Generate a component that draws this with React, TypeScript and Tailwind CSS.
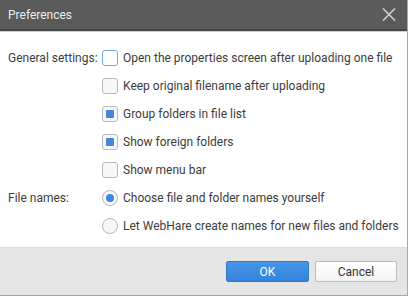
import React from "react";

function Checkbox({ checked, focused }: { checked?: boolean; focused?: boolean }) {
  return (
    <span
      className={`flex h-4 w-4 shrink-0 items-center justify-center rounded-[3px] border ${
        focused ? "border-[#6fa8ec] bg-white" : "border-[#b9b9b9] bg-[#f7f7f7]"
      }`}
    >
      {checked && <span className="h-2 w-2 rounded-[1px] bg-[#3f87df]" />}
    </span>
  );
}

function Radio({ checked }: { checked?: boolean }) {
  return (
    <span className="flex h-4 w-4 shrink-0 items-center justify-center rounded-full border border-[#b9b9b9] bg-[#f7f7f7]">
      {checked && <span className="h-2 w-2 rounded-full bg-[#3f87df]" />}
    </span>
  );
}

function Row({ label, children }: { label?: string; children: React.ReactNode }) {
  return (
    <>
      <div className="flex h-7 items-center whitespace-nowrap">{label}</div>
      <div className="flex h-7 items-center gap-[5px] whitespace-nowrap">{children}</div>
    </>
  );
}

export default function App() {
  return (
    <div className="h-[297px] w-[409px] bg-white font-['Roboto','Liberation_Sans',sans-serif]">
      <div className="flex h-[296px] w-[408px] flex-col border-r border-b border-[#a8a8a8]">
        <div className="flex h-[29px] items-center justify-between bg-[#5a5a5a] pl-2 pr-[11px]">
          <span className="text-[12px] text-[#ececec]">Preferences</span>
          <svg width="14" height="13" viewBox="0 0 14 13" className="text-[#cfcfcf]">
            <path d="M1 0.5l12 12M13 0.5l-12 12" stroke="currentColor" strokeWidth="1.6" fill="none" />
          </svg>
        </div>
        <div className="h-[2px] bg-[#454545]" />
        <div className="h-px bg-[#cfcfcf]" />

        <div className="grid flex-1 grid-cols-[94px_1fr] content-start pt-3 pl-2 text-[12px] text-[#3c3c3c]">
          <Row label="General settings:">
            <Checkbox focused />
            <span>Open the properties screen after uploading one file</span>
          </Row>
          <Row>
            <Checkbox />
            <span>Keep original filename after uploading</span>
          </Row>
          <Row>
            <Checkbox checked />
            <span>Group folders in file list</span>
          </Row>
          <Row>
            <Checkbox checked />
            <span>Show foreign folders</span>
          </Row>
          <Row>
            <Checkbox />
            <span>Show menu bar</span>
          </Row>
          <Row label="File names:">
            <Radio checked />
            <span>Choose file and folder names yourself</span>
          </Row>
          <Row>
            <Radio />
            <span>Let WebHare create names for new files and folders</span>
          </Row>
        </div>

        <div className="flex h-12 items-center justify-end gap-[6px] border-t border-[#dcdcdc] bg-[#e5e5e5] pr-[10px] text-[12px]">
          <button className="h-[21px] w-[83px] rounded-[2px] border border-[#2f7ccf] bg-gradient-to-b from-[#4794e6] to-[#3584da] text-white">
            OK
          </button>
          <button className="h-[21px] w-[82px] rounded-[2px] border border-[#bcbcbc] bg-gradient-to-b from-white to-[#f3f3f3] text-[#333]">
            Cancel
          </button>
        </div>
      </div>
    </div>
  );
}
